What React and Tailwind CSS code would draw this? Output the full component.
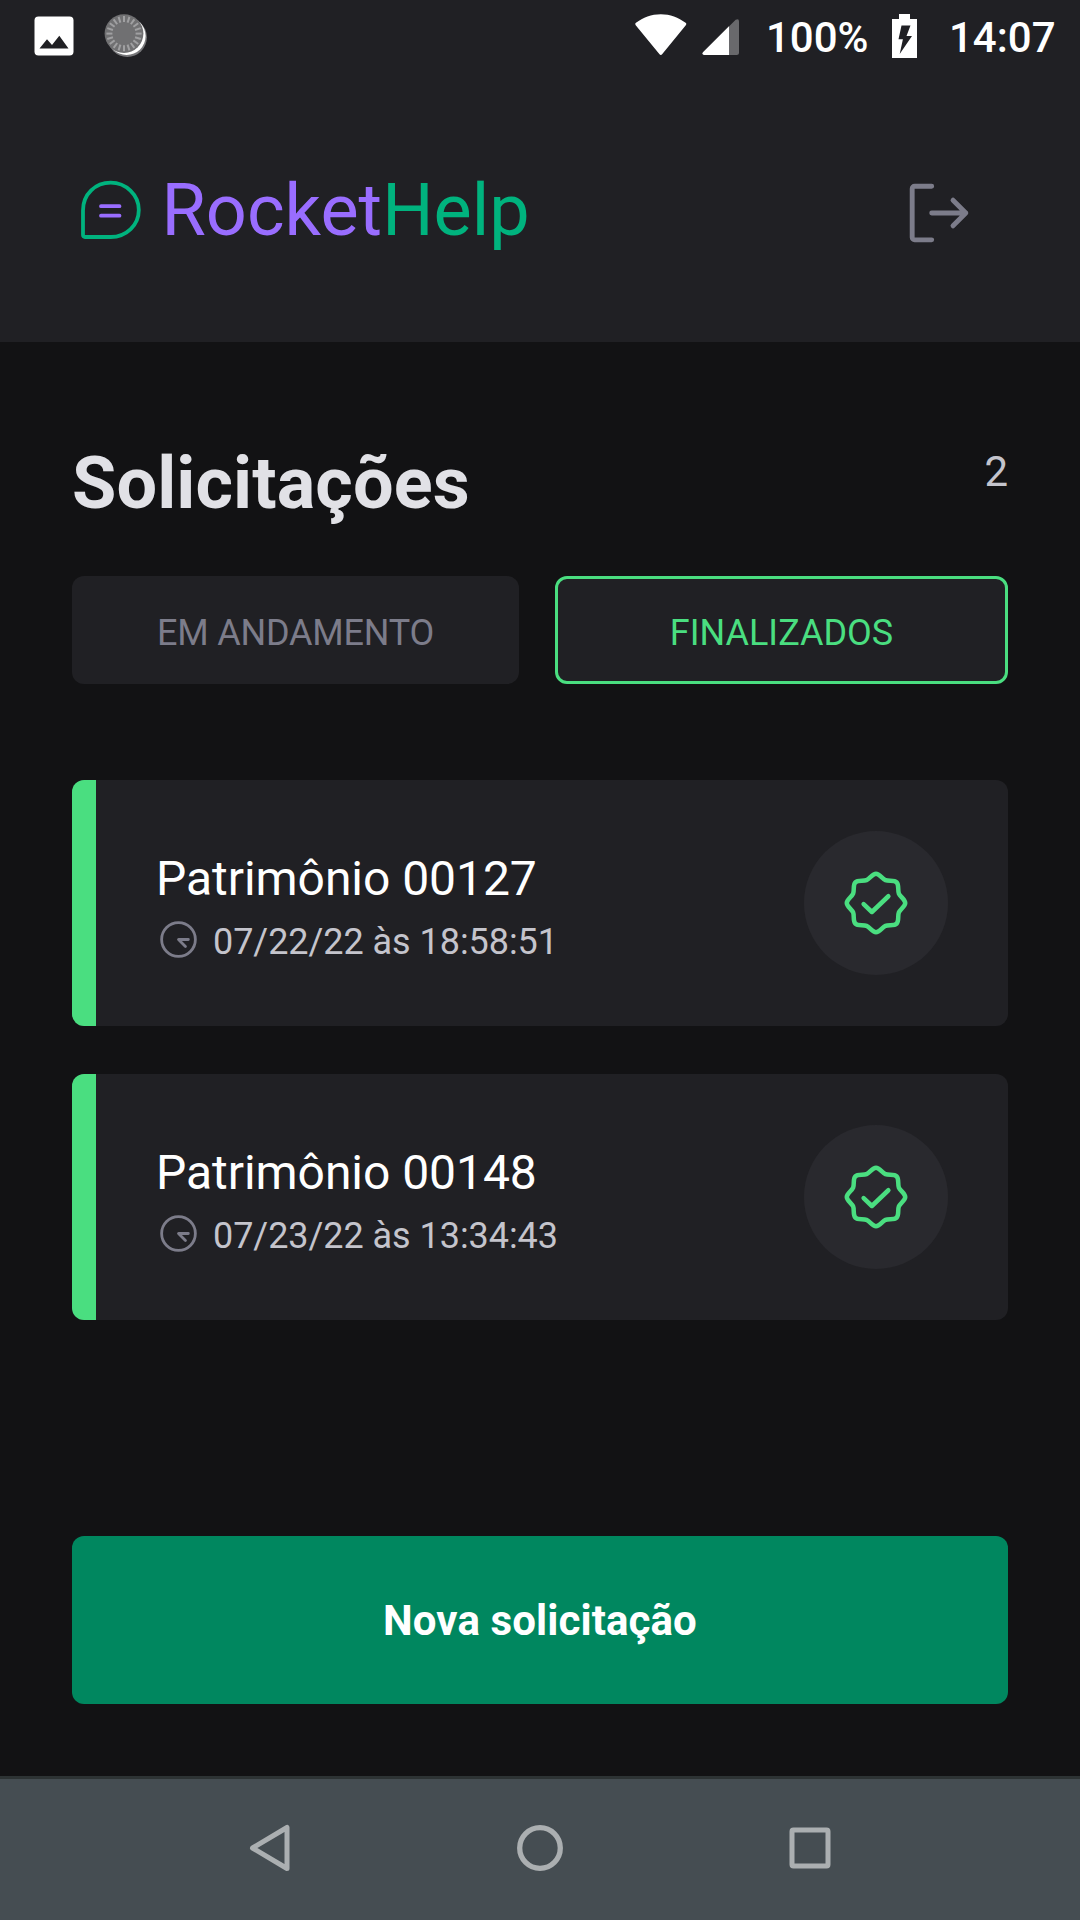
const orders = [
  { id: "00127", when: "07/22/22 às 18:58:51" },
  { id: "00148", when: "07/23/22 às 13:34:43" },
];

function StatusBar() {
  const ticks = Array.from({ length: 20 }, (_, i) => i * 18);
  return (
    <div className="flex h-[72px] items-start text-[42px] leading-[50px] font-medium text-white">
      <svg className="ml-[34px] mt-[16px] h-10 w-10 shrink-0" viewBox="0 0 40 40">
        <rect x="0.5" y="0.5" width="39" height="39" rx="4" fill="#fff" />
        <path d="M5.5 32.5L13 23.3l5 5.8 7.3-9.3L34.5 32.5z" fill="#202024" />
      </svg>
      <svg className="ml-[29px] mt-[12px] h-[48px] w-[48px] shrink-0" viewBox="0 0 48 48">
        <circle cx="24.3" cy="25.3" r="19.6" fill="#77777a" />
        <circle cx="23.6" cy="24" r="19" fill="#fff" />
        <circle cx="21" cy="21.6" r="19.4" fill="#707072" />
        {ticks.map((a) => (
          <path key={a} d="M21 4v6" stroke="#a0a0a2" strokeWidth="2" transform={`rotate(${a} 21 21.6)`} />
        ))}
      </svg>
      <svg className="ml-[484px] mt-[14px] h-[42px] w-[52px] shrink-0" viewBox="0 0 52 42">
        <path d="M1 8.8C8 3.4 16.5.2 25.8.2S43.5 3.4 50.6 8.8q1.3 1 .2 2.4L27.3 40q-1.5 1.8-3 0L.7 11.2q-1-1.4.3-2.4z" fill="#fff" />
      </svg>
      <svg className="ml-[15px] mt-[18px] h-[38px] w-[38px] shrink-0" viewBox="0 0 38 38">
        <path d="M1 34.2L33.7 1.7Q37 0 37 3.500V34.500Q37 37 34.500 37H2.200Q-.5 36.500 1 34.200z" fill="#69696c" />
        <path d="M1 34.2L27 8.2V37H2.200Q-.5 36.500 1 34.200z" fill="#fff" />
      </svg>
      <span className="ml-[26px] mt-[13px] w-[102px]">100%</span>
      <svg className="ml-[24px] mt-[14px] h-[44px] w-[25px] shrink-0" viewBox="0 0 25 44">
        <path d="M7 0h11v5h7v39H0V5h7z" fill="#fff" />
        <path d="M9.500 11.500h9l-4 10.500h5.500L7.700 40l3.200-14.700H6.500z" fill="#202024" />
      </svg>
      <span className="ml-[32px] mt-[13px]">14:07</span>
    </div>
  );
}

function Header() {
  return (
    <div className="flex items-start justify-between pl-[80px] pr-[102px] pt-[102px]">
      <div className="flex items-start">
        <svg className="mt-[6px] h-[60px] w-[62px]" viewBox="0 0 62 60" fill="none" strokeWidth="3.800">
          <path d="M3 30.500C3 14 15.500 2.700 30.700 2.700S58.800 15 58.800 30 46.500 57 30.700 57H5q-2 0-2-2z" stroke="#00B37E" />
          <path d="M21 26.200h18.500M21 35.700h18.500" stroke="#996DFF" strokeLinecap="round" />
        </svg>
        <span className="-mt-[5px] ml-[19.500px] text-[72px] leading-[84px] text-[#996DFF]">
          Rocket<span className="text-[#00B37E]">Help</span>
        </span>
      </div>
      <svg className="h-[78px] w-[78px]" viewBox="0 0 256 256" fill="none" stroke="#7C7C8A" strokeWidth="16" strokeLinecap="round" strokeLinejoin="round">
        <path d="M174 86l42 42-42 42M104 128h112M104 216H48a8 8 0 0 1-8-8V48a8 8 0 0 1 8-8h56" />
      </svg>
    </div>
  );
}

function OrderCard({ order }) {
  return (
    <div className="flex h-[246px] items-center overflow-hidden rounded-[12px] bg-[#202024]">
      <div className="h-full w-6 bg-[#4ade80]" />
      <div className="ml-[60px] flex-1">
        <div className="mt-[6px] text-[48px] leading-[57px] tracking-[-0.05px] text-white">Patrimônio {order.id}</div>
        <div className="mt-[9px] flex items-center">
          <svg className="h-[45px] w-[45px]" viewBox="0 0 256 256" fill="none" stroke="#7C7C8A" strokeWidth="16" strokeLinecap="round" strokeLinejoin="round">
            <circle cx="128" cy="128" r="96" />
            <path d="M167.600 167.600L128 128h56" />
          </svg>
          <span className="ml-[12px] mt-[5px] text-[36px] leading-[42px] tracking-[-0.05px] text-[#C4C4CC]">{order.when}</span>
        </div>
      </div>
      <div className="mr-[60px] flex h-36 w-36 items-center justify-center rounded-full bg-[#29292E]">
        <svg className="h-[72px] w-[72px]" viewBox="0 0 256 256" fill="none" stroke="#4ade80" strokeWidth="16" strokeLinecap="round" strokeLinejoin="round">
          <path d="M54.500 201.500c-9.200-9.200-3.100-28.500-7.800-39.800S24 140.500 24 128s17.800-22 22.700-33.700-1.400-30.600 7.800-39.800S83 51.400 94.300 46.700 115.500 24 128 24s22 17.800 33.700 22.700 30.600-1.400 39.800 7.800 3.100 28.500 7.800 39.800S232 115.500 232 128s-17.800 22-22.700 33.700 1.400 30.600-7.800 39.800-28.500 3.100-39.800 7.800S140.500 232 128 232s-22-17.800-33.700-22.700-30.600 1.400-39.800-7.800z" />
          <path d="M172 104l-58.700 56L84 132" />
        </svg>
      </div>
    </div>
  );
}

function NavBar() {
  return (
    <div className="flex h-36 items-center justify-center gap-[210px] border-t-[3px] border-[#2d3334] bg-[#454d52] pb-[3px]">
      <svg className="h-[60px] w-[60px]" viewBox="0 0 60 60" fill="none" stroke="#abafb1" strokeWidth="5" strokeLinejoin="round">
        <path d="M47 9.500v41L12.500 30z" />
      </svg>
      <svg className="h-[60px] w-[60px]" viewBox="0 0 60 60" fill="none" stroke="#abafb1" strokeWidth="5.300">
        <circle cx="30" cy="30" r="20.300" />
      </svg>
      <svg className="h-[60px] w-[60px]" viewBox="0 0 60 60" fill="none" stroke="#abafb1" strokeWidth="5">
        <rect x="12" y="12" width="36" height="36" rx="1.500" />
      </svg>
    </div>
  );
}

export default function App() {
  return (
    <div className="flex h-[1920px] w-[1080px] flex-col overflow-hidden bg-[#121214] font-['Roboto',sans-serif]">
      <header className="h-[342px] bg-[#202024]">
        <StatusBar />
        <Header />
      </header>
      <main className="flex flex-1 flex-col px-[72px]">
        <div className="mt-[100px] flex h-[134px] items-start justify-between">
          <h1 className="text-[72px] leading-[84px] font-bold tracking-[0.1px] text-[#E1E1E6]">Solicitações</h1>
          <span className="mt-[5px] text-[42px] leading-[50px] text-[#C4C4CC]">2</span>
        </div>
        <div className="flex h-[108px] gap-9 text-[36px] leading-[42px]">
          <button className="w-[447px] rounded-[12px] bg-[#202024] pt-[6px] tracking-[-0.2px] text-[#7C7C8A]">EM ANDAMENTO</button>
          <button className="flex-1 rounded-[12px] border-[3px] border-[#4ade80] bg-[#202024] pt-[6px] text-[#4ade80]">FINALIZADOS</button>
        </div>
        <div className="mt-24 flex flex-col gap-12">
          {orders.map((o) => (
            <OrderCard key={o.id} order={o} />
          ))}
        </div>
        <button className="mt-auto mb-[72px] h-[168px] rounded-[12px] bg-[#00875F] text-[42px] font-bold tracking-[0.1px] text-white">
          Nova solicitação
        </button>
      </main>
      <NavBar />
    </div>
  );
}
